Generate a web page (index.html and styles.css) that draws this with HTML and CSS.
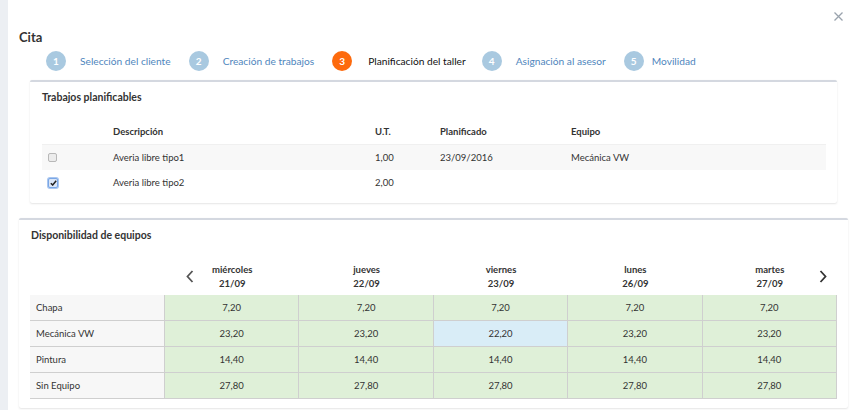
FILE: index.html
```html
<!DOCTYPE html>
<html lang="es">
<head>
<meta charset="utf-8">
<title>Cita</title>
<link rel="stylesheet" href="styles.css">
</head>
<body>
<div class="page">
  <div class="modal">
    <div class="modal-top">
      <button class="close" aria-label="Cerrar">
        <svg width="9" height="9" viewBox="0 0 9 9"><path d="M0.5 0.5L8.5 8.5M8.5 0.5L0.5 8.5" stroke="#9aa3ad" stroke-width="1.3"/></svg>
      </button>
    </div>
    <h1 class="title">Cita</h1>
    <ol class="steps">
      <li class="step"><span class="num">1</span><span class="label">Selección del cliente</span></li>
      <li class="step"><span class="num">2</span><span class="label">Creación de trabajos</span></li>
      <li class="step active"><span class="num">3</span><span class="label">Planificación del taller</span></li>
      <li class="step"><span class="num">4</span><span class="label">Asignación al asesor</span></li>
      <li class="step last"><span class="num">5</span><span class="label">Movilidad</span></li>
    </ol>

    <section class="card card-jobs">
      <h2 class="card-title">Trabajos planificables</h2>
      <div class="jobs">
        <div class="jrow jhead">
          <span></span><span>Descripción</span><span>U.T.</span><span>Planificado</span><span>Equipo</span>
        </div>
        <div class="jrow odd">
          <span><i class="cb"></i></span><span>Averia libre tipo1</span><span>1,00</span><span>23/09/2016</span><span>Mecánica VW</span>
        </div>
        <div class="jrow">
          <span><i class="cb checked"><svg width="7" height="6" viewBox="0 0 7 6"><path d="M0.8 3.2L2.7 5L6.2 0.8" stroke="#222" stroke-width="1.5" fill="none"/></svg></i></span><span>Averia libre tipo2</span><span>2,00</span><span></span><span></span>
        </div>
      </div>
    </section>

    <section class="card card-avail">
      <h2 class="card-title">Disponibilidad de equipos</h2>
      <div class="avail">
        <div class="arow ahead">
          <span class="lab"></span>
          <span class="day first"><svg class="chev chev-l" width="8" height="13" viewBox="0 0 8 13"><path d="M6.5 1L1.5 6.5L6.5 12" stroke="#555" stroke-width="1.8" fill="none"/></svg><b>miércoles</b><b>21/09</b></span>
          <span class="day"><b>jueves</b><b>22/09</b></span>
          <span class="day"><b>viernes</b><b>23/09</b></span>
          <span class="day"><b>lunes</b><b>26/09</b></span>
          <span class="day last"><b>martes</b><b>27/09</b><svg class="chev chev-r" width="8" height="13" viewBox="0 0 8 13"><path d="M1.5 1L6.5 6.5L1.5 12" stroke="#333" stroke-width="1.8" fill="none"/></svg></span>
        </div>
        <div class="arow">
          <span class="lab">Chapa</span><span class="c ok">7,20</span><span class="c ok">7,20</span><span class="c ok">7,20</span><span class="c ok">7,20</span><span class="c ok">7,20</span>
        </div>
        <div class="arow">
          <span class="lab">Mecánica VW</span><span class="c ok">23,20</span><span class="c ok">23,20</span><span class="c sel">22,20</span><span class="c ok">23,20</span><span class="c ok">23,20</span>
        </div>
        <div class="arow">
          <span class="lab">Pintura</span><span class="c ok">14,40</span><span class="c ok">14,40</span><span class="c ok">14,40</span><span class="c ok">14,40</span><span class="c ok">14,40</span>
        </div>
        <div class="arow">
          <span class="lab">Sin Equipo</span><span class="c ok">27,80</span><span class="c ok">27,80</span><span class="c ok">27,80</span><span class="c ok">27,80</span><span class="c ok">27,80</span>
        </div>
      </div>
    </section>
  </div>
</div>
</body>
</html>
```

FILE: styles.css
```css
* { box-sizing: border-box; }
html, body { margin: 0; padding: 0; }
body {
  background: #eceff3;
  font-family: "Lato", "Open Sans", sans-serif;
  color: #333;
  width: 858px;
  height: 410px;
  overflow: hidden;
}
.page {
  padding-left: 8px;
  height: 410px;
}
.modal {
  background: #fff;
  height: 410px;
  padding: 0 10px 0 11px;
}
.modal-top {
  height: 28px;
  display: flex;
  justify-content: flex-end;
  align-items: flex-start;
  padding-top: 12px;
  padding-right: 5px;
}
.close {
  border: 0;
  background: none;
  padding: 0;
  margin: 0;
  width: 9px;
  height: 9px;
  display: block;
  line-height: 0;
}
.title {
  margin: 0;
  font-size: 13px;
  font-weight: 700;
  line-height: 18px;
  height: 18px;
  color: #333;
}
.steps {
  list-style: none;
  margin: 4px 0 0 0;
  padding: 0 0 0 27px;
  display: flex;
  height: 22px;
  align-items: center;
}
.step {
  display: flex;
  align-items: center;
}
.step .num {
  width: 20px;
  height: 20px;
  border-radius: 50%;
  background: #a9c9e0;
  color: #fff;
  font-size: 10px;
  font-weight: 700;
  display: flex;
  align-items: center;
  justify-content: center;
}
.step .label {
  font-size: 10.2px;
  color: #4f86bd;
  margin-left: 14px;
  margin-right: 18px;
}
.step.active .num { background: #fd6a0d; }
.step.active .label { color: #111; margin-left: 16px; margin-right: 16px; }
.step.last .label { margin-left: 8px; }

.card {
  background: #fff;
  border-top: 2px solid #d4d8e0;
  border-radius: 2px;
  box-shadow: 0 1px 2px rgba(0,0,0,0.10), 0 0 1px rgba(0,0,0,0.06);
}
.card-title {
  margin: 0;
  font-size: 10.5px;
  font-weight: 700;
  color: #333;
  line-height: 14px;
}
.card-jobs {
  margin: 8px 11px 0 11px;
  padding: 8px 11px 8px 12px;
}
.jobs {
  margin-top: 17px;
  font-size: 9.5px;
}
.jrow {
  display: grid;
  grid-template-columns: 71px 262px 65px 131px 1fr;
  height: 25px;
  align-items: center;
}
.jrow.jhead {
  font-weight: 700;
  height: 24px;
  padding-bottom: 2px;
  border-bottom: 1px solid #f0f0f0;
  color: #333;
}
.jrow.odd { background: #f8f8f8; }
.cb {
  display: flex;
  align-items: center;
  justify-content: center;
  width: 9px;
  height: 9px;
  margin-left: 6px;
  border: 1px solid #b8b8b8;
  border-radius: 2px;
  background: #ececec;
}
.cb.checked {
  width: 10px;
  height: 10px;
  border: 1px solid #7aa7e6;
  background: #dbe6f7;
  box-shadow: 0 0 0 1px #a9c6f0;
}

.card-avail {
  margin-top: 15px;
  padding: 8px 11px 9px 12px;
}
.avail {
  margin-top: 16px;
  margin-left: -1px;
  font-size: 9.5px;
}
.arow {
  display: grid;
  grid-template-columns: 135px repeat(5, 1fr);
  height: 26px;
  border-bottom: 1px solid #cfcfcf;
}
.arow.ahead {
  height: 37px;
  border-bottom: 0;
}
.lab {
  background: #f7f7f7;
  display: flex;
  align-items: center;
  padding-left: 6px;
  border-right: 1px solid #cfcfcf;
}
.ahead .lab { background: none; border-right: 0; }
.c {
  display: flex;
  align-items: center;
  justify-content: center;
  border-right: 1px solid #cfcfcf;
}
.c.ok { background: #dff0d8; }
.c.sel { background: #d9edf7; }
.day {
  position: relative;
  display: flex;
  flex-direction: column;
  align-items: center;
  justify-content: center;
  padding-top: 1px;
}
.day b { font-weight: 700; line-height: 14px; }
.chev { position: absolute; top: 12px; }
.chev-l { left: 21px; }
.chev-r { right: 10px; }
```
